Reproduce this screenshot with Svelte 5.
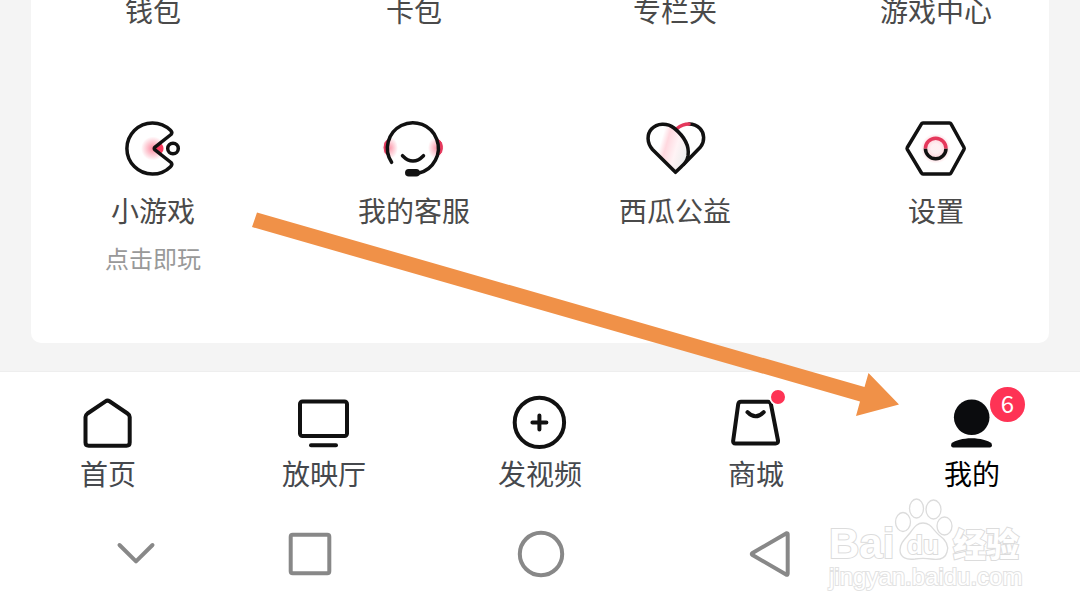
<script>
  const shortcuts = ['钱包', '卡包', '专栏夹', '游戏中心'];

  const services = [
    { icon: 'game', label: '小游戏', note: '点击即玩' },
    { icon: 'support', label: '我的客服' },
    { icon: 'charity', label: '西瓜公益' },
    { icon: 'settings', label: '设置' }
  ];

  const tabs = [
    { icon: 'home', label: '首页' },
    { icon: 'cinema', label: '放映厅' },
    { icon: 'publish', label: '发视频' },
    { icon: 'mall', label: '商城', dot: true },
    { icon: 'me', label: '我的', badge: 6 }
  ];

  let active = $state('me');
</script>

<div class="page">
  <main>
    <section class="card">
      <div class="row">
        {#each shortcuts as name}
          <button class="item"><span class="label">{name}</span></button>
        {/each}
      </div>

      <div class="row services">
        {#each services as s (s.icon)}
          <button class="item">
            <svg class="icon" viewBox="0 0 64 64" aria-hidden="true">
              {#if s.icon === 'game'}
                <defs>
                  <radialGradient id="game-glow">
                    <stop offset="0" stop-color="#fa3c5f" stop-opacity=".6" />
                    <stop offset="1" stop-color="#fa3c5f" stop-opacity="0" />
                  </radialGradient>
                </defs>
                <circle cx="32" cy="32.5" r="12" fill="url(#game-glow)" />
                <path d="M33 32.5L50 17.5L54 20V45L50 47.5Z" fill="#fff" />
                <path d="M33 32.5L39 26.5Q42.5 29 42.500 32.500Q42.500 36 39 38.500Z" fill="#fa3c5f" />
                <path class="line" d="M34 31.100L50 18.500Q51.800 16.500 49.500 14.300A25.600 25.600 0 1 0 49.500 50.700Q51.800 48.500 50 46.500L34 33.900Q32.500 32.500 34 31.100Z" />
                <circle class="line" cx="52" cy="32.5" r="5.3" />
              {:else if s.icon === 'support'}
                <defs>
                  <radialGradient id="ear-glow">
                    <stop offset="0" stop-color="#fa3c5f" stop-opacity=".5" />
                    <stop offset="1" stop-color="#fa3c5f" stop-opacity="0" />
                  </radialGradient>
                </defs>
                <ellipse cx="8" cy="32" rx="8" ry="11" fill="url(#ear-glow)" />
                <ellipse cx="54" cy="32" rx="8" ry="11" fill="url(#ear-glow)" />
                <path d="M6 23.500A6 8.500 0 0 0 6 39.500ZM56.500 23.500A6 8.500 0 0 1 56.500 39.500Z" fill="#e5385c" stroke="#e5385c" />
                <path class="line" d="M9.600 46.300A25.500 25.500 0 1 1 37 57" />
                <path class="line" d="M20.500 39.700Q31 50.500 41.500 39.700" />
                <rect x="23" y="53" width="15" height="7.600" rx="3.800" fill="#111" />
              {:else if s.icon === 'charity'}
                <defs>
                  <linearGradient id="leaf" x1=".1" y1=".3" x2=".95" y2=".6">
                    <stop offset=".25" stop-color="#fff" />
                    <stop offset=".42" stop-color="#ffd8df" />
                    <stop offset=".7" stop-color="#fff3f5" />
                    <stop offset="1" stop-color="#eee" />
                  </linearGradient>
                </defs>
                <path class="line" d="M40.500 48.500L57.500 31C62 25.500 61.500 17 57 12.500C54 9.500 50 8 46 8" />
                <path class="line accent" d="M34 12.500Q39.500 8 46 8" />
                <path class="line" style:fill="url(#leaf)" d="M32.500 56.300L9.500 33.500C3.500 26.500 4 18 8.500 13C14 7 24 6.500 31 12C42 21 46.500 31 45 40C44 45 42 47 38 51Z" />
              {:else}
                <defs>
                  <radialGradient id="nut-glow">
                    <stop offset=".3" stop-color="#fa3c5f" stop-opacity=".08" />
                    <stop offset=".65" stop-color="#fa3c5f" stop-opacity=".22" />
                    <stop offset="1" stop-color="#fa3c5f" stop-opacity="0" />
                  </radialGradient>
                </defs>
                <path class="line" d="M19 6.900H45.500Q46.500 6.900 47 7.900L60 31.500Q60.500 32.400 60 33.300L47 57Q46.500 58 45.500 58H19Q18 58 17.500 57L3.300 33.300Q2.800 32.400 3.300 31.500L17.500 7.900Q18 6.900 19 6.900Z" />
                <circle cx="31.700" cy="32.500" r="15" fill="url(#nut-glow)" />
                <path class="line flat" d="M21.400 32.500A10.300 10.300 0 0 0 42 32.500" />
                <path class="line flat accent" d="M21.400 32.500A10.300 10.300 0 0 1 42 32.500" />
              {/if}
            </svg>
            <span class="label">{s.label}</span>
            {#if s.note}
              <span class="note">{s.note}</span>
            {/if}
          </button>
        {/each}
      </div>
    </section>
  </main>

  <nav class="tabs">
    {#each tabs as tab (tab.icon)}
      <a
        href="#{tab.icon}"
        class="tab"
        class:active={active === tab.icon}
        onclick={() => (active = tab.icon)}
      >
        <span class="tab-icon">
          <svg class="icon" viewBox="0 0 64 64" aria-hidden="true">
            {#if tab.icon === 'home'}
              <path class="line" d="M9.500 26Q9.500 24 11.500 22.500L29.500 10.300Q31.500 9 33.500 10.300L51.500 22.500Q53.700 24 53.700 26V51.500Q53.700 54.700 50.500 54.700H12.700Q9.500 54.700 9.500 51.500Z" />
            {:else if tab.icon === 'cinema'}
              <rect class="line" x="8" y="10.500" width="47" height="34.500" rx="2.500" />
              <path class="line" d="M19 54.300H44" />
            {:else if tab.icon === 'publish'}
              <circle class="line" cx="31.400" cy="31.400" r="24.700" />
              <path class="line" d="M31.400 24.400V38.400M24.400 31.400H38.400" />
            {:else if tab.icon === 'mall'}
              <path class="line" d="M17 10.700H44Q46.500 10.700 46.900 13.200L54 49.500Q54.300 52.500 51.500 52.500H11.500Q8.800 52.500 9.200 49.500L14.200 13.200Q14.600 10.700 17 10.700Z" />
              <path class="line" d="M23.500 21.200Q31.500 29.500 39.700 21.200" />
            {:else}
              <circle cx="31.700" cy="26.300" r="17.800" fill="#0b0c0e" />
              <path d="M13 56.500Q10 55.500 11.500 52.500C15 49.500 23 47.300 31.500 47.300S48 49.500 51.500 52.500Q53 55.500 50 56.500Z" fill="#0b0c0e" />
            {/if}
          </svg>
          {#if tab.dot}<span class="dot"></span>{/if}
          {#if tab.badge}<span class="badge">{tab.badge}</span>{/if}
        </span>
        <span class="label">{tab.label}</span>
      </a>
    {/each}
  </nav>

  <div class="system">
    <button aria-label="收起">
      <svg viewBox="0 0 48 48"><path d="M7.500 15L24 31.300L40.500 15" /></svg>
    </button>
    <button aria-label="最近任务">
      <svg viewBox="0 0 48 48"><rect x="4.700" y="4.700" width="38.600" height="38.600" rx="2" /></svg>
    </button>
    <button aria-label="主屏幕">
      <svg viewBox="0 0 48 48"><circle cx="24" cy="24" r="21.200" /></svg>
    </button>
    <button aria-label="返回">
      <svg viewBox="0 0 48 48"><path d="M4.500 23Q3 24 4.500 25L38.500 44.800Q39.700 45 39.700 43.500V4.500Q39.700 3 38.500 3.200Z" /></svg>
    </button>
  </div>

  <svg class="arrow" viewBox="0 0 1080 612" aria-hidden="true">
    <path d="M257 212.500L864.500 387L868.500 373L899 404.500L856 416L860 401.500L252 227Z" fill="#f09148" />
  </svg>

  <svg class="watermark" viewBox="0 0 204 100">
    <text class="brand" x="6" y="62">Bai</text>
    <g class="paw">
      <ellipse cx="80" cy="26" rx="7.500" ry="9.500" />
      <ellipse cx="93.500" cy="12.500" rx="7" ry="9.500" />
      <ellipse cx="110.500" cy="13.500" rx="7.500" ry="9.500" />
      <ellipse cx="121.500" cy="30" rx="7.500" ry="9" />
      <path d="M100 27C108 27 110 34 116 39C123 44 126 50 124 56C122 64 114 64 108 63C102 62 98 62 92 63C84 64 77 62 77 54C77 47 82 43 87 37C91 32 93 27 100 27Z" />
    </g>
    <text class="du" x="84" y="58">du</text>
    <text class="cn" x="130" y="61">经验</text>
    <text class="url" x="6" y="89">jingyan.baidu.com</text>
  </svg>
</div>

<style>
  :global(body) { background: #fff; }
  .page { position: relative; overflow: hidden;
          font-family: "Noto Sans CJK SC", "Noto Sans", sans-serif; }
  main { padding: 0 31px 28px; background: #f4f4f4; }
  .card { padding-bottom: 73px; background: #fff; border-radius: 0 0 10px 10px; }
  .row { display: flex; justify-content: space-between; align-items: flex-start;
         padding: 0 13px 0 22px; }
  .services { margin-top: 96px; }

  button { padding: 0; border: 0; background: none; font: inherit; cursor: pointer; }
  .item { display: flex; flex-direction: column; align-items: center; width: 200px; }
  .label { font-size: 28px; line-height: 20px; color: #4a4a4a; white-space: nowrap; }
  .note { margin-top: 26px; font-size: 24px; line-height: 24px; color: #999; }
  .icon { display: block; width: 64px; height: 64px; }
  .item .icon { margin-bottom: 20px; }

  .line { fill: none; stroke: #111; stroke-width: 3.5; stroke-linecap: round; stroke-linejoin: round; }
  .accent { stroke: #e5385c; }
  .flat { stroke-linecap: butt; }

  .tabs { display: grid; grid-template-columns: repeat(5, 1fr); padding-top: 19px;
          background: #fff; border-top: 1px solid #eee; }
  .tab { display: flex; flex-direction: column; align-items: center; gap: 8px;
         text-decoration: none; }
  .tab .label { color: #45484d; }
  .tab.active .label { color: #000; }
  .tab .line { stroke-width: 4; }
  .tab-icon { position: relative; }
  .dot { position: absolute; top: -3px; right: 1px; width: 14px; height: 14px;
         border: 2px solid #fff; border-radius: 50%; background: #fe3355; }
  .badge { position: absolute; top: -4px; left: 50px; width: 35px; height: 35px;
           border-radius: 50%; background: #fe3355; color: #fff;
           font-size: 24px; line-height: 32px; text-align: center; }

  .system { display: grid; grid-template-columns: 117fr 231fr 231fr 231fr; justify-items: center;
            padding: 47px 192px 34px 77px; }
  .system svg { display: block; width: 48px; height: 48px; fill: none; stroke: #888;
                stroke-width: 4; stroke-linecap: round; stroke-linejoin: round; }

  .arrow { position: absolute; top: 0; left: 0; width: 100%; pointer-events: none; }

  .watermark { position: absolute; right: 53px; bottom: 16px; width: 204px; height: 100px;
               pointer-events: none; }
  .watermark text, .paw { fill: #fff; stroke: #dcdcdc; stroke-width: 2; paint-order: stroke; }
  .watermark .paw { stroke-width: 1.3; paint-order: normal; }
  .brand { font: bold 42px "Liberation Sans", sans-serif; }
  .du { font: bold 26px "Liberation Sans", sans-serif; }
  .cn { font: 900 33px "Noto Sans CJK SC", sans-serif; }
  .watermark .url { font: 24px "Liberation Sans", sans-serif; stroke: #e2e2e2; }
</style>
